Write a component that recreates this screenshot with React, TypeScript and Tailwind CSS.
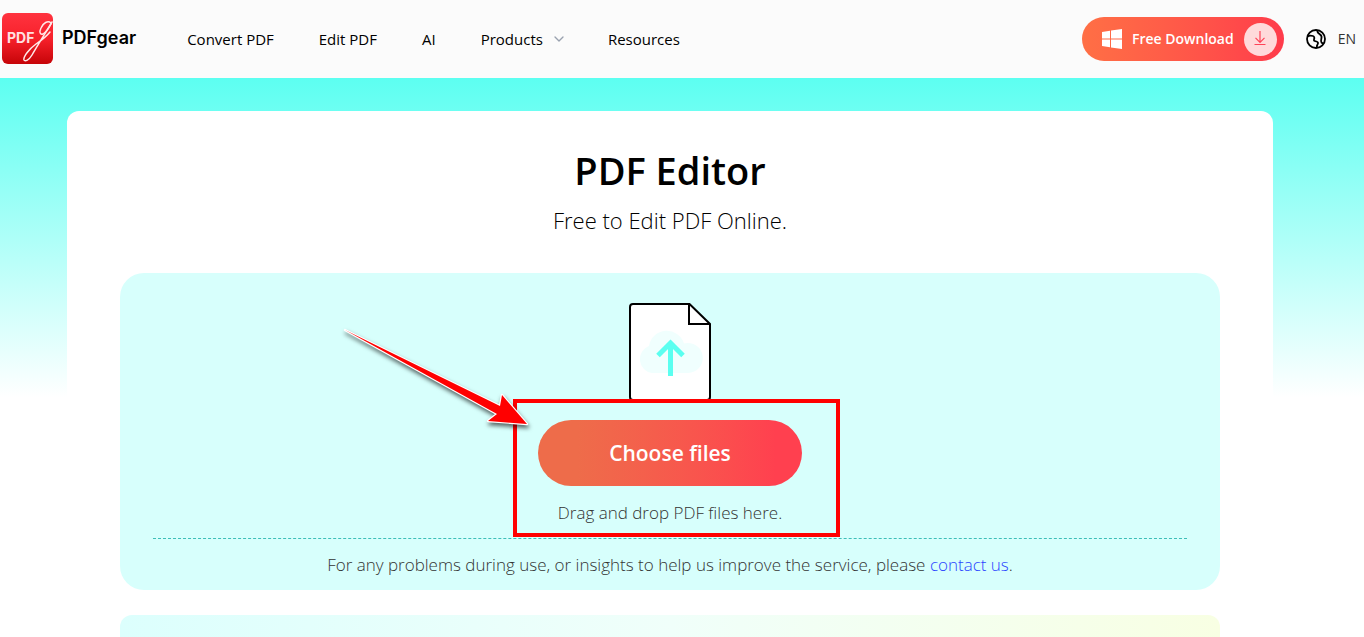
import { ChevronDown } from "lucide-react";

const navLinks = [
  { label: "Convert PDF", href: "#convert" },
  { label: "Edit PDF", href: "#edit" },
  { label: "AI", href: "#ai" },
];

function Logo() {
  return (
    <svg viewBox="0 0 51 51" className="size-[51px]" aria-hidden="true">
      <defs>
        <linearGradient id="logo-bg" x1="0" y1="0" x2="0" y2="1">
          <stop offset="0" stopColor="#ff333f" />
          <stop offset="0.5" stopColor="#f7212b" />
          <stop offset="1" stopColor="#c60408" />
        </linearGradient>
      </defs>
      <rect width="51" height="51" rx="6" fill="url(#logo-bg)" />
      <text x="5" y="30" fill="#ffe1e1" fontSize="14" fontWeight="700" fontFamily="Inter, sans-serif">
        PDF
      </text>
      <g fill="none" stroke="#ffe9e9" strokeLinecap="round">
        <path d="M49 10c-3-3-8 0-10 5-2 4-1 7 2 6 3-2 6-6 8-10" strokeWidth="1.500" />
        <path d="M50 9C44 19 34 35 30 42c-3 5-7 7-8 5-1-3 5-11 12-16 6-4 10-7 14-12" strokeWidth="1.500" />
      </g>
    </svg>
  );
}

function WindowsIcon() {
  return (
    <svg viewBox="0 0 20 20" className="size-5" fill="#fff" aria-hidden="true">
      <path d="M0 3l8-1.200v7.700H0zM9 1.600L20 0v9.500H9zM0 10.500h8v7.700L0 17zM9 10.500h11V20L9 18.400z" />
    </svg>
  );
}

function DownloadIcon() {
  return (
    <svg viewBox="0 0 14 16" className="h-4 w-3.5" fill="none" stroke="#ff4458" strokeWidth="1.200" aria-hidden="true">
      <path d="M7 0v11M2.500 6.800L7 11.300l4.500-4.500M1.500 13.500h11" />
    </svg>
  );
}

function GlobeIcon() {
  return (
    <svg viewBox="0 0 20 20" className="size-5" fill="none" stroke="#000" strokeWidth="1.800" aria-hidden="true">
      <circle cx="10" cy="10" r="9" />
      <path d="M11.500 1.500c-.5 1.500.5 2.500 2 3.500s2.500 2 2 4-1 3.500 0 4.500 1.500.8 2 .8" />
      <path d="M1.500 7.500c1.500-1 4-1 5.500-.5s1.500 2 1 3.500 1 1.500 2.500 2 2 1.500 1 3-.8 2-.5 3.500" />
    </svg>
  );
}

function UploadFileIcon() {
  return (
    <svg viewBox="0 0 82 98" className="h-[98px] w-[82px]" aria-hidden="true">
      <path d="M4 1h56.500L81 21v73a3 3 0 0 1-3 3H4a3 3 0 0 1-3-3V4a3 3 0 0 1 3-3z" fill="#fff" stroke="#000" strokeWidth="2" />
      <path d="M60 1v20h21" fill="none" stroke="#000" strokeWidth="2" />
      <path d="M23 70a14 14 0 0 1-3-27 18 18 0 0 1 35-2.500 15 15 0 1 1 4 29.500z" fill="#f0fffe" />
      <path d="M41.500 73V41M29 52.500L41.500 40 54 52.500" fill="none" stroke="#5bfff0" strokeWidth="5" />
    </svg>
  );
}

// Red frame and arrow pointing at the upload button
function Callout() {
  return (
    <div className="pointer-events-none absolute inset-y-0 -right-[38px] -left-[25px] border-4 border-[#f00]">
      <svg
        viewBox="0 0 200 110"
        className="absolute -top-[81px] -left-[180px] h-[110px] w-[200px] drop-shadow-[1px_3px_2px_rgba(0,0,0,0.6)]"
        aria-hidden="true"
      >
        <path
          d="M8 8L163 84l2-11 25 29-39-3 9-7z"
          fill="#f00"
          stroke="#fff"
          strokeWidth="2.400"
          strokeLinejoin="round"
          paintOrder="stroke"
        />
      </svg>
    </div>
  );
}

export default function App() {
  return (
    <div className="flex min-h-screen flex-col bg-white font-['Open_Sans',sans-serif] text-black">
      <header className="flex h-[78px] items-center justify-between bg-[#fbfbfb] pr-2 pl-0.5">
        <div className="flex items-center">
          <a href="#home" className="flex items-center gap-[9px] pb-0.5 font-['Inter',sans-serif] text-lg font-semibold">
            <Logo />
            PDFgear
          </a>
          <nav className="ml-[51px] flex items-center gap-[45px] text-[15px]">
            {navLinks.map((link) => (
              <a key={link.label} href={link.href}>
                {link.label}
              </a>
            ))}
            <button type="button" className="-mr-1 flex items-center gap-2">
              Products
              <ChevronDown className="size-4 text-gray-400" />
            </button>
            <a href="#resources">Resources</a>
          </nav>
        </div>
        <div className="flex items-center gap-[22px]">
          <a
            href="#download"
            className="flex h-11 items-center gap-2.5 rounded-full bg-linear-to-r from-[#ff6f45] to-[#ff3b4b] pr-[7px] pl-5 text-sm font-semibold text-white"
          >
            <WindowsIcon />
            Free Download
            <span className="flex size-[33px] items-center justify-center rounded-full bg-[#ffdadb]">
              <DownloadIcon />
            </span>
          </a>
          <button type="button" className="flex items-center gap-3 text-sm text-[#333]">
            <GlobeIcon />
            EN
          </button>
        </div>
      </header>

      <main className="flex flex-1 flex-col bg-[linear-gradient(#5cfff1,#ffffff_320px)] pt-[33px] pr-6">
        <section className="mx-auto flex w-full max-w-[1206px] flex-1 flex-col rounded-t-xl bg-white px-[53px] pt-8">
          <h1 className="text-center text-[38px] leading-[54px] font-semibold">PDF Editor</h1>
          <p className="mt-2 text-center text-[22px] leading-[30px] font-light">Free to Edit PDF Online.</p>

          <div className="mt-[38px] rounded-3xl bg-[#d7fffc] px-[33px] pt-[30px] pb-3 text-center text-[17px] font-light text-[#333]">
            <div className="flex justify-center">
              <UploadFileIcon />
            </div>
            <div className="relative mx-auto -mt-0.5 flex h-[138px] w-[264px] flex-col pt-[21px]">
              <button
                type="button"
                className="h-[66px] w-full rounded-full bg-linear-to-r from-[#ee6c4a] from-15% to-[#ff404f] to-90% pt-0.5 text-[21px] font-semibold text-white"
              >
                Choose files
              </button>
              <p className="mt-3.5 leading-[26px]">Drag and drop PDF files here.</p>
              <Callout />
            </div>
            <p className="mt-px border-t border-dashed border-[#3dbfb8] pt-[13px] leading-[26px]">
              For any problems during use, or insights to help us improve the service, please{" "}
              <a href="#contact" className="text-[#2b45ff]">
                contact us
              </a>
              .
            </p>
          </div>

          <div className="mt-[25px] flex-1 rounded-t-xl bg-linear-to-r from-[#dcfffd] via-[#f0fffa] to-[#f8ffe3]" />
        </section>
      </main>
    </div>
  );
}
